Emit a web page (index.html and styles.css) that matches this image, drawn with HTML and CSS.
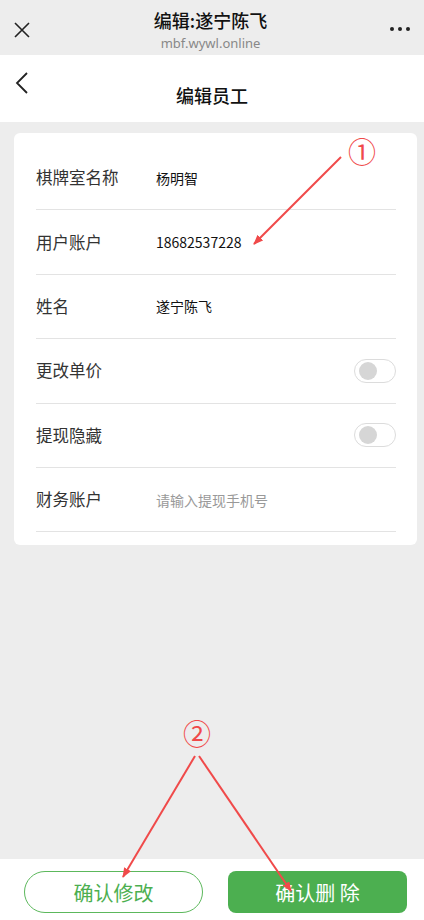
FILE: index.html
```html
<!DOCTYPE html>
<html lang="zh-CN">
<head>
    <meta charset="UTF-8">
    <title>编辑员工</title>
    <link rel="stylesheet" href="styles.css">
</head>
<body>
<div class="page">
    <!--微信顶栏-->
    <div class="wx-bar">
        <span class="wx-close">
            <svg width="18" height="18" viewBox="0 0 18 18"><path d="M2 2L16 16M16 2L2 16" stroke="#222" stroke-width="1.6" fill="none"/></svg>
        </span>
        <div class="wx-title">
            <p class="wx-name">编辑:遂宁陈飞</p>
            <p class="wx-url">mbf.wywl.online</p>
        </div>
        <span class="wx-more"><i></i><i></i><i></i></span>
    </div>
    <!--页面标题-->
    <div class="header">
        <span class="back">
            <svg width="16" height="24" viewBox="0 0 16 24"><path d="M13 2L3 12L13 22" stroke="#222" stroke-width="1.8" fill="none"/></svg>
        </span>
        <h1>编辑员工</h1>
    </div>
    <!--表单-->
    <div class="main">
        <ul class="card">
            <li class="row"><span class="label">棋牌室名称</span><span class="value">杨明智</span></li>
            <li class="row"><span class="label">用户账户</span><span class="value">18682537228</span></li>
            <li class="row"><span class="label">姓名</span><span class="value">遂宁陈飞</span></li>
            <li class="row"><span class="label">更改单价</span><span class="switch"><i></i></span></li>
            <li class="row"><span class="label">提现隐藏</span><span class="switch"><i></i></span></li>
            <li class="row"><span class="label">财务账户</span><span class="value holder">请输入提现手机号</span></li>
        </ul>
    </div>
    <!--底部按钮-->
    <div class="footer">
        <a href="#" class="btn btn-line">确认修改</a>
        <a href="#" class="btn btn-fill">确认删 除</a>
    </div>
    <!--标注-->
    <svg class="marks" width="424" height="920" viewBox="0 0 424 920">
        <defs>
            <marker id="head" markerWidth="10" markerHeight="8" refX="9" refY="4" orient="auto" markerUnits="userSpaceOnUse">
                <path d="M0 0L10 4L0 8Z" fill="#f04a4a"/>
            </marker>
        </defs>
        <text x="362" y="163" class="num">①</text>
        <line x1="341" y1="157" x2="254" y2="244" stroke="#f04a4a" stroke-width="2" marker-end="url(#head)"/>
        <text x="197" y="745" class="num">②</text>
        <line x1="195" y1="756" x2="123" y2="877" stroke="#f04a4a" stroke-width="2" marker-end="url(#head)"/>
        <line x1="199" y1="756" x2="291" y2="891" stroke="#f04a4a" stroke-width="2" marker-end="url(#head)"/>
    </svg>
</div>
</body>
</html>
```

FILE: styles.css
```css
* {
    margin: 0;
    padding: 0;
}

ul {
    list-style: none;
}

a {
    text-decoration: none;
}

body {
    font-family: "Noto Sans CJK SC", "Noto Sans", sans-serif;
    background-color: #ededed;
}

.page {
    position: relative;
    width: 424px;
    height: 920px;
    display: flex;
    flex-direction: column;
    overflow: hidden;
}

.wx-bar {
    height: 55px;
    box-sizing: border-box;
    display: flex;
    align-items: center;
    justify-content: space-between;
    padding: 0 14px 0 13px;
    background-color: #ededed;
}

.wx-close {
    width: 18px;
    height: 18px;
    margin-top: 3px;
}

.wx-title {
    align-self: flex-start;
    text-align: center;
    padding-top: 8px;
}

.wx-name {
    font-size: 18px;
    font-weight: 500;
    line-height: 24px;
    color: #111;
}

.wx-url {
    font-family: "Noto Sans", sans-serif;
    font-size: 13px;
    line-height: 18px;
    margin-top: 2px;
    color: #888;
}

.wx-more {
    display: flex;
    gap: 4px;
    width: 20px;
    margin-top: 3px;
}

.wx-more i {
    width: 4px;
    height: 4px;
    border-radius: 50%;
    background-color: #222;
}

.header {
    height: 67px;
    display: flex;
    align-items: flex-start;
    background-color: #fff;
}

.back {
    width: 16px;
    height: 24px;
    margin: 16px 0 0 14px;
}

.header h1 {
    flex: 1;
    margin: 28px 30px 0 0;
    text-align: center;
    font-size: 18px;
    font-weight: 500;
    line-height: 24px;
    color: #111;
}

.main {
    flex: 1;
    padding: 11px 7px 0 14px;
}

.card {
    background-color: #fff;
    border-radius: 6px;
    padding: 13px 21px 13px 22px;
}

.row {
    height: 64.4px;
    box-sizing: border-box;
    display: flex;
    align-items: center;
    border-bottom: 1px solid #e3e3e3;
}

.label {
    width: 120px;
    font-size: 16.5px;
    color: #333;
    margin-top: -1px;
}

.value {
    font-size: 14px;
    color: #111;
}

.holder {
    color: #999;
}

.switch {
    margin-left: auto;
    width: 42px;
    height: 24px;
    box-sizing: border-box;
    border: 1px solid #dcdcdc;
    border-radius: 12px;
    display: flex;
    align-items: center;
    padding-left: 4px;
}

.switch i {
    width: 18px;
    height: 18px;
    border-radius: 50%;
    background-color: #d6d6d6;
}

.footer {
    height: 61px;
    background-color: #fff;
    display: flex;
    justify-content: space-between;
    padding: 12px 17px 0 24px;
    box-sizing: border-box;
}

.btn {
    width: 179px;
    height: 42px;
    box-sizing: border-box;
    display: flex;
    align-items: center;
    justify-content: center;
    font-size: 20px;
}

.btn-line {
    border: 1px solid #5cb85c;
    border-radius: 21px;
    color: #4caf50;
}

.btn-fill {
    background-color: #4caf50;
    border-radius: 8px;
    color: #fff;
}

.marks {
    position: absolute;
    top: 0;
    left: 0;
    pointer-events: none;
}

.num {
    font-family: "Noto Sans CJK SC", sans-serif;
    font-size: 28px;
    fill: #f04a4a;
    text-anchor: middle;
}
```
